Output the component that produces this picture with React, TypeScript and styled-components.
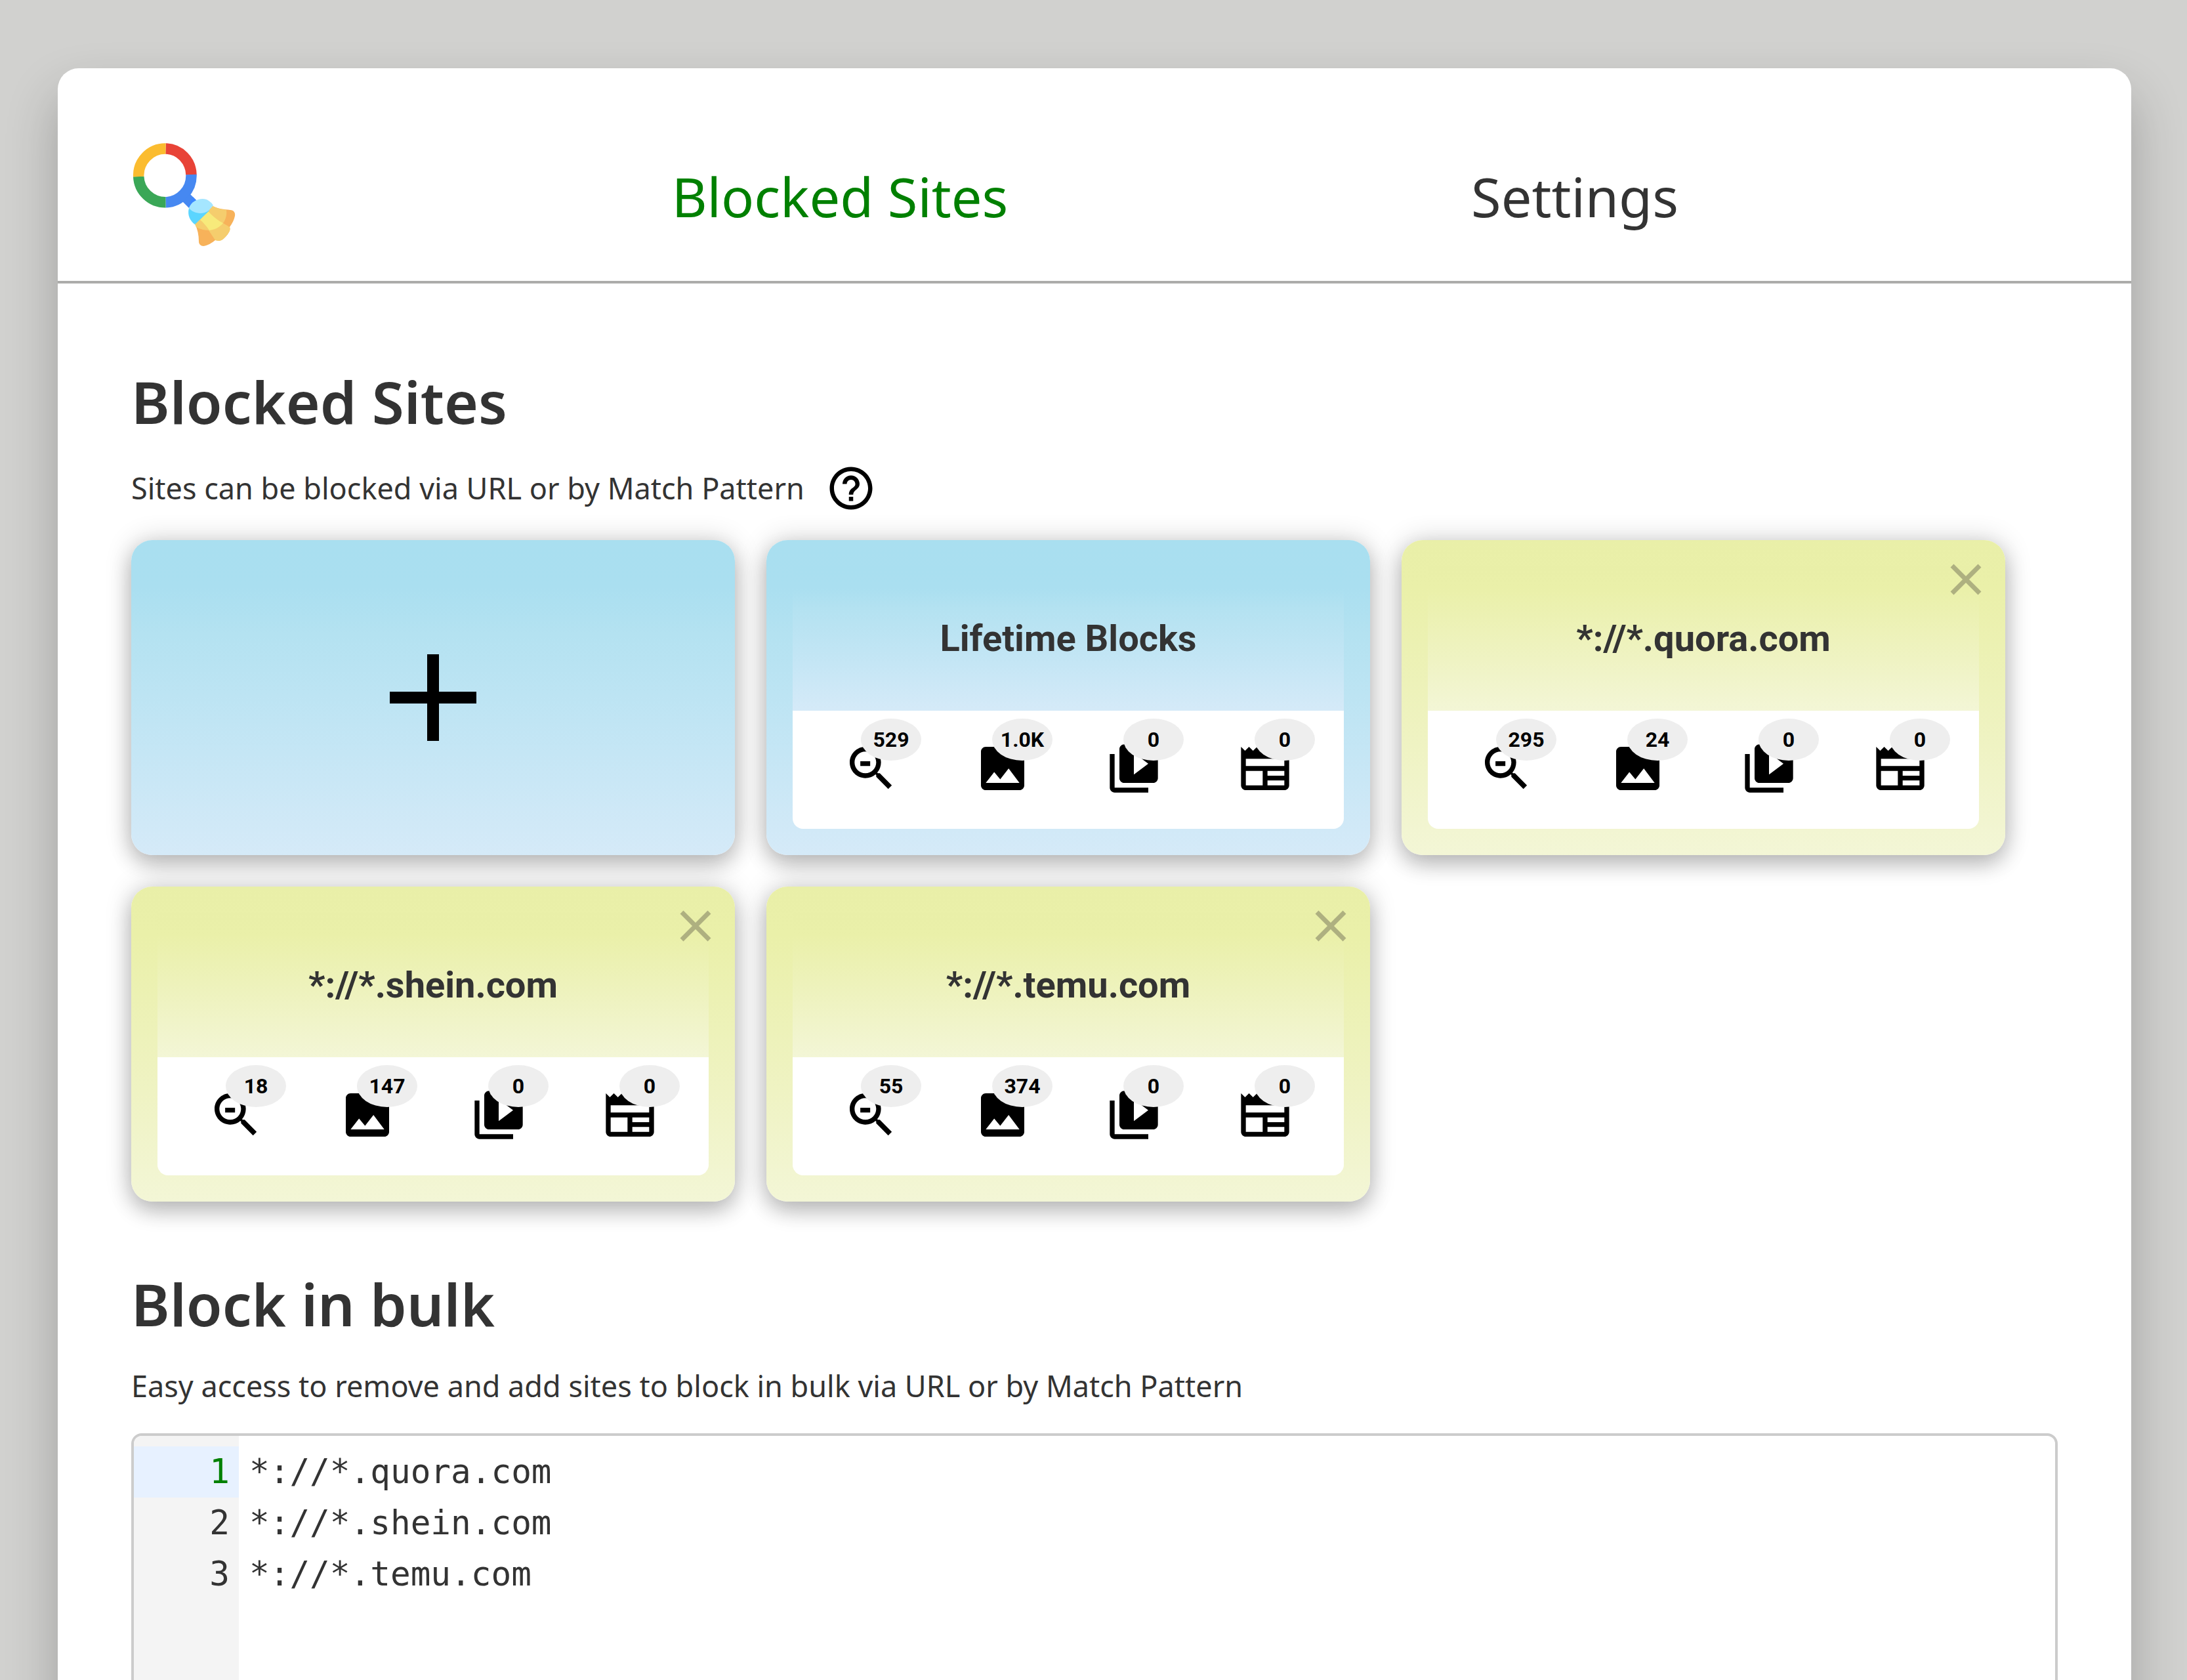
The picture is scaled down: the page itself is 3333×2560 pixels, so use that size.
import React from "react";
import styled, { createGlobalStyle } from "styled-components";

const GlobalStyle = createGlobalStyle`
  * { box-sizing: border-box; }
  body {
    margin: 0;
    background: #d1d1cf;
    color: #333333;
    font-family: "Segoe UI", "Noto Sans", sans-serif;
  }
`;

const Page = styled.div`
  height: 100vh;
  padding: 104px 85px 0 88px;
  overflow: hidden;
`;

const Panel = styled.main`
  background: #ffffff;
  border-radius: 32px 32px 0 0;
  box-shadow: 0 40px 80px rgba(0, 0, 0, 0.24);
`;

const Header = styled.header`
  display: flex;
  align-items: center;
  padding: 112px 112px 52px;
  border-bottom: 4px solid #acacaa;
`;

const Logo = styled.svg`
  flex: none;
  width: 160px;
  height: 160px;
`;

const Nav = styled.nav`
  flex: 1;
  display: grid;
  grid-template-columns: 1fr 1fr;
  justify-items: center;
  margin: 0 176px 0 360px;
  padding-top: 6px;
`;

const NavLink = styled.a<{ $active?: boolean }>`
  color: ${(p) => (p.$active ? "#008000" : "#333333")};
  font-size: 83px;
  line-height: 120px;
  text-decoration: none;
  white-space: nowrap;
`;

const Content = styled.div`
  padding: 120px 112px;
`;

const Section = styled.section`
  & + & {
    margin-top: 96px;
  }
`;

const Heading = styled.h1`
  margin: 0;
  font-size: 89px;
  line-height: 120px;
  font-weight: 600;
`;

const Intro = styled.div`
  display: flex;
  align-items: center;
  gap: 32px;
  margin: 33px 0 40px;
  font-size: 45px;
  line-height: 64px;
`;

const IntroText = styled.p`
  margin: 0;
`;

const IconButton = styled.button`
  display: block;
  padding: 0;
  border: 0;
  background: none;
  color: inherit;
  cursor: pointer;
`;

const HelpButton = styled(IconButton)`
  color: #000000;
`;

const Glyph = styled.svg<{ $size: number }>`
  display: block;
  width: ${(p) => p.$size}px;
  height: ${(p) => p.$size}px;
  fill: currentColor;
`;

const Cards = styled.div`
  display: flex;
  flex-wrap: wrap;
  gap: 48px;
`;

const blue = "linear-gradient(#a9dff0, #aadff0 15%, #b4e2f1 30%, #c5e6f5 68%, #d5eaf8)";
const yellow = "linear-gradient(#e9efa8, #eaf0a9 15%, #eff3c3 65%, #f3f6d6)";

const Card = styled.article<{ $blue?: boolean }>`
  position: relative;
  width: 920px;
  height: 480px;
  padding: 40px;
  border-radius: 32px;
  background: ${(p) => (p.$blue ? blue : yellow)};
  box-shadow: 0 16px 32px rgba(0, 0, 0, 0.2), 0 0 40px rgba(0, 0, 0, 0.19);
`;

const AddCard = styled(Card).attrs({ as: "button" })`
  display: flex;
  align-items: center;
  justify-content: center;
  border: 0;
  color: #000000;
  cursor: pointer;
`;

const CardTitle = styled.h2<{ $blue?: boolean }>`
  display: flex;
  align-items: center;
  justify-content: center;
  height: 220px;
  margin: 0;
  background: ${(p) => (p.$blue ? blue : yellow)};
  font-family: Roboto, sans-serif;
  font-size: 56px;
  font-weight: 700;
`;

const Stats = styled.ul`
  display: grid;
  grid-template-columns: repeat(4, 1fr);
  justify-items: center;
  height: 180px;
  margin: 0;
  padding: 44px 20px 0;
  border-radius: 0 0 16px 16px;
  background: #ffffff;
  color: #000000;
  list-style: none;
`;

const Stat = styled.li`
  position: relative;
`;

const Badge = styled.span`
  position: absolute;
  top: -32px;
  left: 28px;
  width: 92px;
  height: 64px;
  border-radius: 50%;
  background: #eeeeee;
  font: 700 32px/64px Roboto, sans-serif;
  text-align: center;
`;

const RemoveButton = styled(IconButton)`
  position: absolute;
  top: 36px;
  right: 36px;
  color: #aeb080;
`;

const Editor = styled.div`
  display: grid;
  grid-template-columns: 160px 1fr;
  height: 800px;
  border: 4px solid #cccccc;
  border-radius: 16px;
  overflow: hidden;
  font: 51px/78px "DejaVu Sans Mono", monospace;
`;

const Gutter = styled.div`
  padding-top: 16px;
  background: #f4f4f4;
`;

const LineNumber = styled.div<{ $active?: boolean }>`
  padding-right: 14px;
  background: ${(p) => (p.$active ? "#e7f1ff" : "transparent")};
  color: ${(p) => (p.$active ? "#008000" : "#333333")};
  text-align: right;
`;

const Code = styled.textarea`
  width: 100%;
  padding: 16px;
  border: 0;
  outline: 0;
  resize: none;
  background: transparent;
  color: #333333;
  font: inherit;
`;

const STAT_ICONS = [
  {
    name: "Search results",
    d: "M15.5 14h-.79l-.28-.27C15.41 12.59 16 11.11 16 9.5 16 5.91 13.09 3 9.5 3S3 5.91 3 9.5 5.91 16 9.5 16c1.61 0 3.09-.59 4.23-1.57l.27.28v.79l5 4.99L20.49 19l-4.99-5zm-6 0C7.01 14 5 11.99 5 9.5S7.01 5 9.5 5 14 7.01 14 9.5 11.99 14 9.5 14zM7.4 9h4.1v2H7.4z",
  },
  {
    name: "Images",
    d: "M21 19V5c0-1.1-.9-2-2-2H5c-1.1 0-2 .9-2 2v14c0 1.1.9 2 2 2h14c1.1 0 2-.9 2-2zM8.5 13.5l2.5 3.01L14.5 12l4.5 6H5l3.5-4.5z",
  },
  {
    name: "Videos",
    d: "M4 6H2v14c0 1.1.9 2 2 2h14v-2H4V6zm16-4H8c-1.1 0-2 .9-2 2v12c0 1.1.9 2 2 2h12c1.1 0 2-.9 2-2V4c0-1.1-.9-2-2-2zm-8 12.5v-9l6 4.5-6 4.5z",
  },
  {
    name: "News",
    d: "M22 3l-1.67 1.67L18.67 3 17 4.67 15.33 3l-1.66 1.67L12 3l-1.67 1.67L8.67 3 7 4.67 5.33 3 3.67 4.67 2 3v16c0 1.1.9 2 2 2h16c1.1 0 2-.9 2-2V3zM11 19H4v-6h7v6zm9 0h-7v-2h7v2zm0-4h-7v-2h7v2zm0-4H4V8h16v3z",
  },
];

const SITES = [
  { title: "Lifetime Blocks", counts: ["529", "1.0K", "0", "0"], total: true },
  { title: "*://*.quora.com", counts: ["295", "24", "0", "0"] },
  { title: "*://*.shein.com", counts: ["18", "147", "0", "0"] },
  { title: "*://*.temu.com", counts: ["55", "374", "0", "0"] },
];

const PATTERNS = SITES.filter((s) => !s.total).map((s) => s.title);

function SiteCard({ title, counts, total }: { title: string; counts: string[]; total?: boolean }) {
  return (
    <Card $blue={total}>
      <CardTitle $blue={total}>{title}</CardTitle>
      <Stats>
        {STAT_ICONS.map((icon, i) => (
          <Stat key={icon.name}>
            <Glyph $size={88} viewBox="0 0 24 24" aria-label={icon.name}>
              <path d={icon.d} />
            </Glyph>
            <Badge>{counts[i]}</Badge>
          </Stat>
        ))}
      </Stats>
      {!total && (
        <RemoveButton aria-label={`Remove ${title}`}>
          <Glyph $size={48} viewBox="0 0 48 48">
            <path d="M3 3 45 45M45 3 3 45" stroke="currentColor" strokeWidth="7" />
          </Glyph>
        </RemoveButton>
      )}
    </Card>
  );
}

function BroomLogo() {
  return (
    <Logo viewBox="200 216 160 160" aria-label="Search cleaner">
      <g fill="none" strokeWidth="16.5">
        <path d="M252.5 226.5A40 40.8 0 0 1 291.5 266.5" stroke="#e84337" />
        <path d="M291.5 266A40 40.8 0 0 1 252.5 308.3" stroke="#4688f1" />
        <path d="M252.5 308.3A40.8 40.8 0 0 1 211.2 269" stroke="#3aa757" />
        <path d="M211.2 269.2A40.8 40.8 0 0 1 252.5 226.5" stroke="#fbbc2f" />
      </g>
      <path d="M290 296L300 306L288 317L278 307Z" fill="#4688f1" />
      <path d="M294 300L302 308L291 318L287 314Z" fill="#3c87ff" />
      <path d="M324 314C332 318 341 319 351 320C356 320 359 324 358 329C357 335 354 340 350 346C351 350 350 352 347 357C343 362 339 366 334 367C331 367 330 366 328 366C323 370 317 374 310 375C306 375 303 372 303 368C303 358 301 349 297 341Z" fill="#f7b25a" />
      <path d="M324 314C332 318 338 319 345 320C346 327 344 335 340 340L350 346C352 350 349 354 347 357C343 362 339 367 333 367L328 366L318 351C310 351 303 348 299 346L297 341Z" fill="#f5cd6d" />
      <path d="M317 322C325 330 332 336 340 340C334 347 327 350 319 351C314 344 310 339 305 335Z" fill="#f7ea7b" />
      <path d="M288 317C285 328 290 337 297 342L319 321L310 312Z" fill="#5bd5ff" />
      <path d="M288 317C291 308 300 303 309 303C316 303 322 308 325 313L318 321C308 328 294 325 288 317Z" fill="#a5e6ff" />
    </Logo>
  );
}

export default function App() {
  return (
    <>
      <GlobalStyle />
      <Page>
        <Panel>
          <Header>
            <BroomLogo />
            <Nav>
              <NavLink href="#sites" $active>
                Blocked Sites
              </NavLink>
              <NavLink href="#settings">Settings</NavLink>
            </Nav>
          </Header>
          <Content>
            <Section id="sites">
              <Heading>Blocked Sites</Heading>
              <Intro>
                <IntroText>Sites can be blocked via URL or by Match Pattern</IntroText>
                <HelpButton aria-label="Help">
                  <Glyph $size={78} viewBox="0 0 24 24">
                    <path d="M11 18h2v-2h-2v2zm1-16C6.48 2 2 6.48 2 12s4.48 10 10 10 10-4.48 10-10S17.52 2 12 2zm0 18c-4.41 0-8-3.59-8-8s3.59-8 8-8 8 3.59 8 8-3.59 8-8 8zm0-14c-2.21 0-4 1.79-4 4h2c0-1.1.9-2 2-2s2 .9 2 2c0 2-3 1.75-3 5h2c0-2.25 3-2.5 3-5 0-2.21-1.79-4-4-4z" />
                  </Glyph>
                </HelpButton>
              </Intro>
              <Cards>
                <AddCard $blue aria-label="Add site">
                  <Glyph $size={132} viewBox="0 0 132 132">
                    <path d="M57 0h18v57h57v18H75v57H57V75H0V57h57z" />
                  </Glyph>
                </AddCard>
                {SITES.map((site) => (
                  <SiteCard key={site.title} {...site} />
                ))}
              </Cards>
            </Section>
            <Section>
              <Heading as="h2">
                <label htmlFor="bulk">Block in bulk</label>
              </Heading>
              <Intro>
                <IntroText>
                  Easy access to remove and add sites to block in bulk via URL or by Match Pattern
                </IntroText>
              </Intro>
              <Editor>
                <Gutter>
                  {PATTERNS.map((pattern, i) => (
                    <LineNumber key={pattern} $active={i === 0}>
                      {i + 1}
                    </LineNumber>
                  ))}
                </Gutter>
                <Code id="bulk" spellCheck={false} defaultValue={PATTERNS.join("\n")} />
              </Editor>
            </Section>
          </Content>
        </Panel>
      </Page>
    </>
  );
}
